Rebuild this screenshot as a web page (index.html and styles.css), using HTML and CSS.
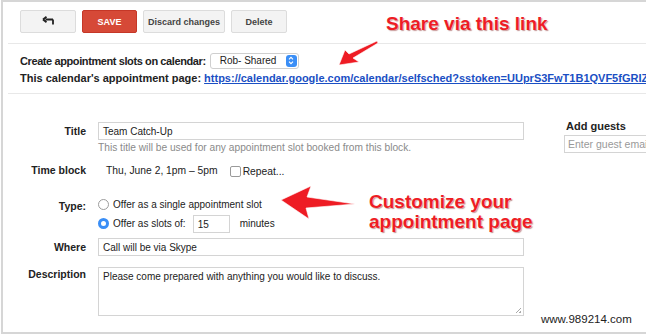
FILE: index.html
```html
<!DOCTYPE html>
<html lang="en">
<head>
    <meta charset="UTF-8">
    <title>Appointment slots</title>
    <link rel="stylesheet" href="styles.css">
</head>
<body>
    <div class="page">
        <div class="toolbar">
            <button class="btn btn-back">
                <svg width="12" height="10" viewBox="0 0 12 10"><path d="M11 3.5H3.5M1 3.5L4.5 0.8M1 3.5L4.5 6.2M11 3.5V8.5" stroke="#222" stroke-width="1.8" fill="none"/></svg>
            </button>
            <button class="btn btn-save">SAVE</button>
            <button class="btn btn-discard">Discard changes</button>
            <button class="btn btn-delete">Delete</button>
        </div>
        <div class="sep"></div>

        <div class="calendar-info">
            <div class="info-line">
                <span class="tight">Create appointment slots on calendar:</span>
                <span class="select">Rob- Shared<span class="stepper"><svg width="6" height="9" viewBox="0 0 6 9"><path d="M1 3.3L3 1.3L5 3.3M1 5.7L3 7.7L5 5.7" stroke="#fff" stroke-width="1.1" fill="none"/></svg></span></span>
            </div>
            <div class="info-line">
                This calendar's appointment page:
                <a class="page-link" href="#">https://calendar.google.com/calendar/selfsched?sstoken=UUprS3FwT1B1QVF5fGRIZ</a>
            </div>
        </div>
        <div class="sep sep-2"></div>

        <div class="form-area">
            <div class="form-main">
                <div class="row row-title">
                    <div class="label">Title</div>
                    <div class="input wide">Team Catch-Up</div>
                </div>
                <div class="hint">This title will be used for any appointment slot booked from this block.</div>

                <div class="row row-time">
                    <div class="label">Time block</div>
                    <div class="time">Thu, June 2, 1pm &ndash; 5pm</div>
                    <span class="checkbox"></span>
                    <span class="repeat">Repeat...</span>
                </div>

                <div class="row row-type">
                    <div class="label">Type:</div>
                    <div class="options">
                        <div class="option"><span class="radio"></span>Offer as a single appointment slot</div>
                        <div class="option"><span class="radio radio-on"></span>Offer as slots of:<span class="input small">15</span>minutes</div>
                    </div>
                </div>

                <div class="row row-where">
                    <div class="label">Where</div>
                    <div class="input wide">Call will be via Skype</div>
                </div>

                <div class="row row-desc">
                    <div class="label">Description</div>
                    <div class="input wide textarea">Please come prepared with anything you would like to discuss.<span class="grip"></span></div>
                </div>
            </div>

            <div class="guests">
                <div class="guests-title">Add guests</div>
                <div class="input guest-input">Enter guest email</div>
            </div>
        </div>

        <div class="note note-share">Share via this link</div>
        <div class="note note-custom">Customize your<br>appointment page</div>
        <svg class="arrows" width="646" height="335" viewBox="0 0 646 335">
            <polygon points="339,65 345,50 349,54 377,41 378,43 353,58 359,62" fill="#ee1c24" stroke="#fff" stroke-width="0.6"/>
            <polygon points="281,200 311,186 307,197 355,204 306,208 309,219" fill="#ee1c24" stroke="#fff" stroke-width="0.6"/>
        </svg>
        <div class="watermark">www.989214.com</div>
    </div>
</body>
</html>
```

FILE: styles.css
```css
body {
    margin: 0;
    font-family: "Liberation Sans", Arial, sans-serif;
    font-size: 11px;
    color: #222;
    background-color: #fff;
    overflow: hidden;
}
.page {
    position: relative;
    box-sizing: border-box;
    height: 334px;
    margin-left: 1px;
    border-top: 2px solid #d6d6d6;
    border-left: 2px solid #d6d6d6;
    border-bottom: 2px solid #d6d6d6;
    overflow: hidden;
}
.toolbar {
    display: flex;
    gap: 6px;
    padding: 8px 0 0 17px;
}
.btn {
    box-sizing: border-box;
    height: 23px;
    padding: 0;
    border: 1px solid #dcdcdc;
    border-radius: 2px;
    background-color: #f3f3f3;
    color: #444;
    font-family: inherit;
    font-size: 9px;
    font-weight: bold;
    white-space: nowrap;
}
.btn-back {
    width: 56px;
}
.btn-save {
    width: 55px;
    background-color: #d64937;
    border-color: #c53727;
    color: #fff;
}
.btn-discard {
    width: 82px;
}
.btn-delete {
    width: 56px;
}
.sep {
    height: 1px;
    margin: 10px 0 0 5px;
    background-color: #e8e8e8;
}
.sep-2 {
    margin-top: 7px;
}
.calendar-info {
    padding: 8px 0 0 17px;
    font-weight: bold;
    white-space: nowrap;
}
.info-line {
    display: flex;
    align-items: center;
    height: 17px;
}
.tight {
    letter-spacing: -0.4px;
}
.select {
    position: relative;
    box-sizing: border-box;
    width: 89px;
    height: 16px;
    margin-left: 4px;
    padding: 1px 0 0 9px;
    border: 1px solid #cfcfcf;
    border-radius: 3px;
    font-weight: normal;
    font-size: 10px;
    background-color: #fff;
}
.stepper {
    position: absolute;
    right: 1px;
    top: 1px;
    width: 11px;
    height: 12px;
    border-radius: 3px;
    background-color: #3a8ef6;
    display: flex;
    align-items: center;
    justify-content: center;
}
.page-link {
    margin-left: 3px;
    color: #1a4fc4;
    text-decoration: underline;
}
.form-area {
    display: flex;
    padding-top: 28px;
    font-size: 10px;
}
.form-main {
    width: 521px;
}
.row {
    display: flex;
    align-items: center;
}
.label {
    box-sizing: border-box;
    width: 85px;
    padding-right: 2px;
    margin-right: 10px;
    text-align: right;
    font-weight: bold;
    font-size: 10.5px;
}
.input {
    box-sizing: border-box;
    height: 18px;
    padding: 2px 4px;
    border: 1px solid #d4d4d4;
    background-color: #fff;
    color: #222;
    white-space: nowrap;
    line-height: 13px;
}
.wide {
    width: 426px;
}
.hint {
    margin: 2px 0 0 95px;
    color: #8a8a8a;
    font-size: 10.2px;
    line-height: 12px;
}
.row-time {
    margin-top: 8px;
    height: 16px;
}
.time {
    margin-left: 8px;
    font-size: 10.3px;
}
.checkbox {
    box-sizing: border-box;
    width: 11px;
    height: 11px;
    margin: 3px 2px 0 12px;
    border: 1px solid #9a9a9a;
    border-radius: 2px;
}
.repeat {
    margin-top: 3px;
    font-size: 10.3px;
}
.row-type {
    align-items: flex-start;
    margin-top: 18px;
}
.row-type .label {
    margin-top: 4px;
}
.options {
    display: flex;
    flex-direction: column;
    gap: 2px;
}
.option {
    display: flex;
    align-items: center;
    height: 17px;
}
.radio {
    box-sizing: border-box;
    width: 11px;
    height: 11px;
    margin-right: 4px;
    border: 1px solid #9c9c9c;
    border-radius: 50%;
    background-color: #fff;
}
.radio-on {
    border: 3px solid #3a8ef6;
    background-color: #fff;
}
.input.small {
    width: 37px;
    margin: 0 10px 0 7px;
}
.row-where {
    margin-top: 6px;
}
.row-desc {
    align-items: flex-start;
    margin-top: 11px;
}
.row-desc .label {
    margin-top: 1px;
}
.textarea {
    position: relative;
    height: 49px;
    padding-top: 2px;
}
.grip {
    position: absolute;
    right: 2px;
    bottom: 2px;
    width: 5px;
    height: 5px;
    background: linear-gradient(135deg, transparent 45%, #aaa 45%, #aaa 55%, transparent 55%, transparent 75%, #aaa 75%);
}
.guests {
    margin-left: 40px;
    margin-top: -3px;
}
.guests-title {
    font-weight: bold;
    font-size: 11px;
    margin-left: 2px;
    line-height: 14px;
}
.guest-input {
    width: 100px;
    margin-top: 2px;
    padding-left: 3px;
    color: #999;
    font-size: 10.5px;
}
.note {
    position: absolute;
    color: #ee1c24;
    font-size: 19px;
    font-weight: bold;
    line-height: 20px;
    text-shadow: 0 0 2px #fff, 1px 1px 1px rgba(120, 0, 0, 0.5);
}
.note-share {
    left: 383px;
    top: 12px;
}
.note-custom {
    left: 366px;
    top: 190px;
}
.arrows {
    position: absolute;
    left: -3px;
    top: -2px;
}
.watermark {
    position: absolute;
    left: 538px;
    top: 311px;
    font-size: 11.5px;
    color: #222;
}
```
